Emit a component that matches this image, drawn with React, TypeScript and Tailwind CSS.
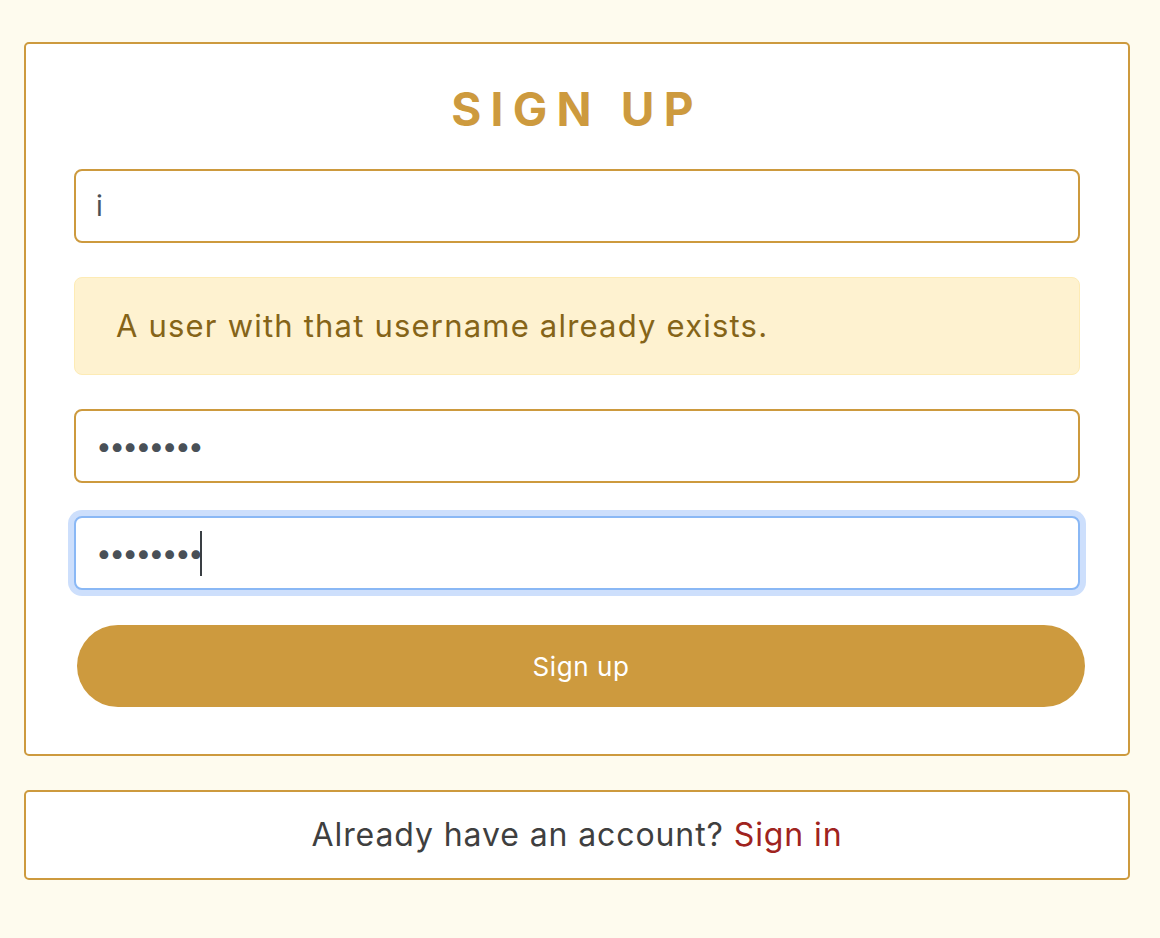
import React from 'react';

const gold = 'border-[#cd9a3e]';

const Field: React.FC<{ value: string; type?: string; focused?: boolean }> = ({ value, type = 'text', focused }) => (
    <div className="relative">
        <input
            readOnly
            type={type}
            value={value}
            className={
                'block h-[74px] w-full rounded-lg border-2 bg-white px-[20px] text-[28px] text-[#495057] outline-none ' +
                (type === 'password' ? 'tracking-[-2.6px] ' : '') +
                (focused ? 'border-[#8ab8f5] shadow-[0_0_0_6px_#cddffc]' : gold)
            }
        />
        {focused && <span className="absolute left-[126px] top-[15px] h-[45px] w-[2px] bg-[#3a3f44]" />}
    </div>
);

export default function App() {
    return (
        <div className="min-h-[938px] bg-[#fefbee] pl-6 pt-[42px] font-['Inter','Liberation_Sans',sans-serif]">
            <div className={'w-[1106px] rounded-[5px] border-2 bg-white px-12 pb-[47px] pt-[37px] ' + gold}>
                <h1 className="text-center text-[46px] font-bold leading-[56px] tracking-[0.2em] text-[#cd9a3e]">SIGN UP</h1>
                <div className="mt-[32px] flex flex-col">
                    <Field value="i" />
                    <div className="mt-[34px] flex h-[98px] items-center rounded-lg border border-[#fdebb5] bg-[#fef2d0] px-[41px] text-[31px] tracking-[1.2px] text-[#856418]">
                        A user with that username already exists.
                    </div>
                    <div className="mt-[34px]">
                        <Field type="password" value="12345678" />
                    </div>
                    <div className="mt-[33px]">
                        <Field type="password" value="12345678" focused />
                    </div>
                    <button className="ml-[3px] mr-[-5px] mt-[35px] h-[82px] rounded-full bg-[#cd9a3e] text-[26px] tracking-[0.6px] text-white">
                        Sign up
                    </button>
                </div>
            </div>
            <div className={'mt-[34px] flex h-[90px] w-[1106px] items-center justify-center rounded-[5px] border-2 bg-white text-[32px] tracking-[0.9px] text-[#3f3f3f] ' + gold}>
                <span>
                    Already have an account? <a className="text-[#9f2320]" href="#">Sign in</a>
                </span>
            </div>
        </div>
    );
}
